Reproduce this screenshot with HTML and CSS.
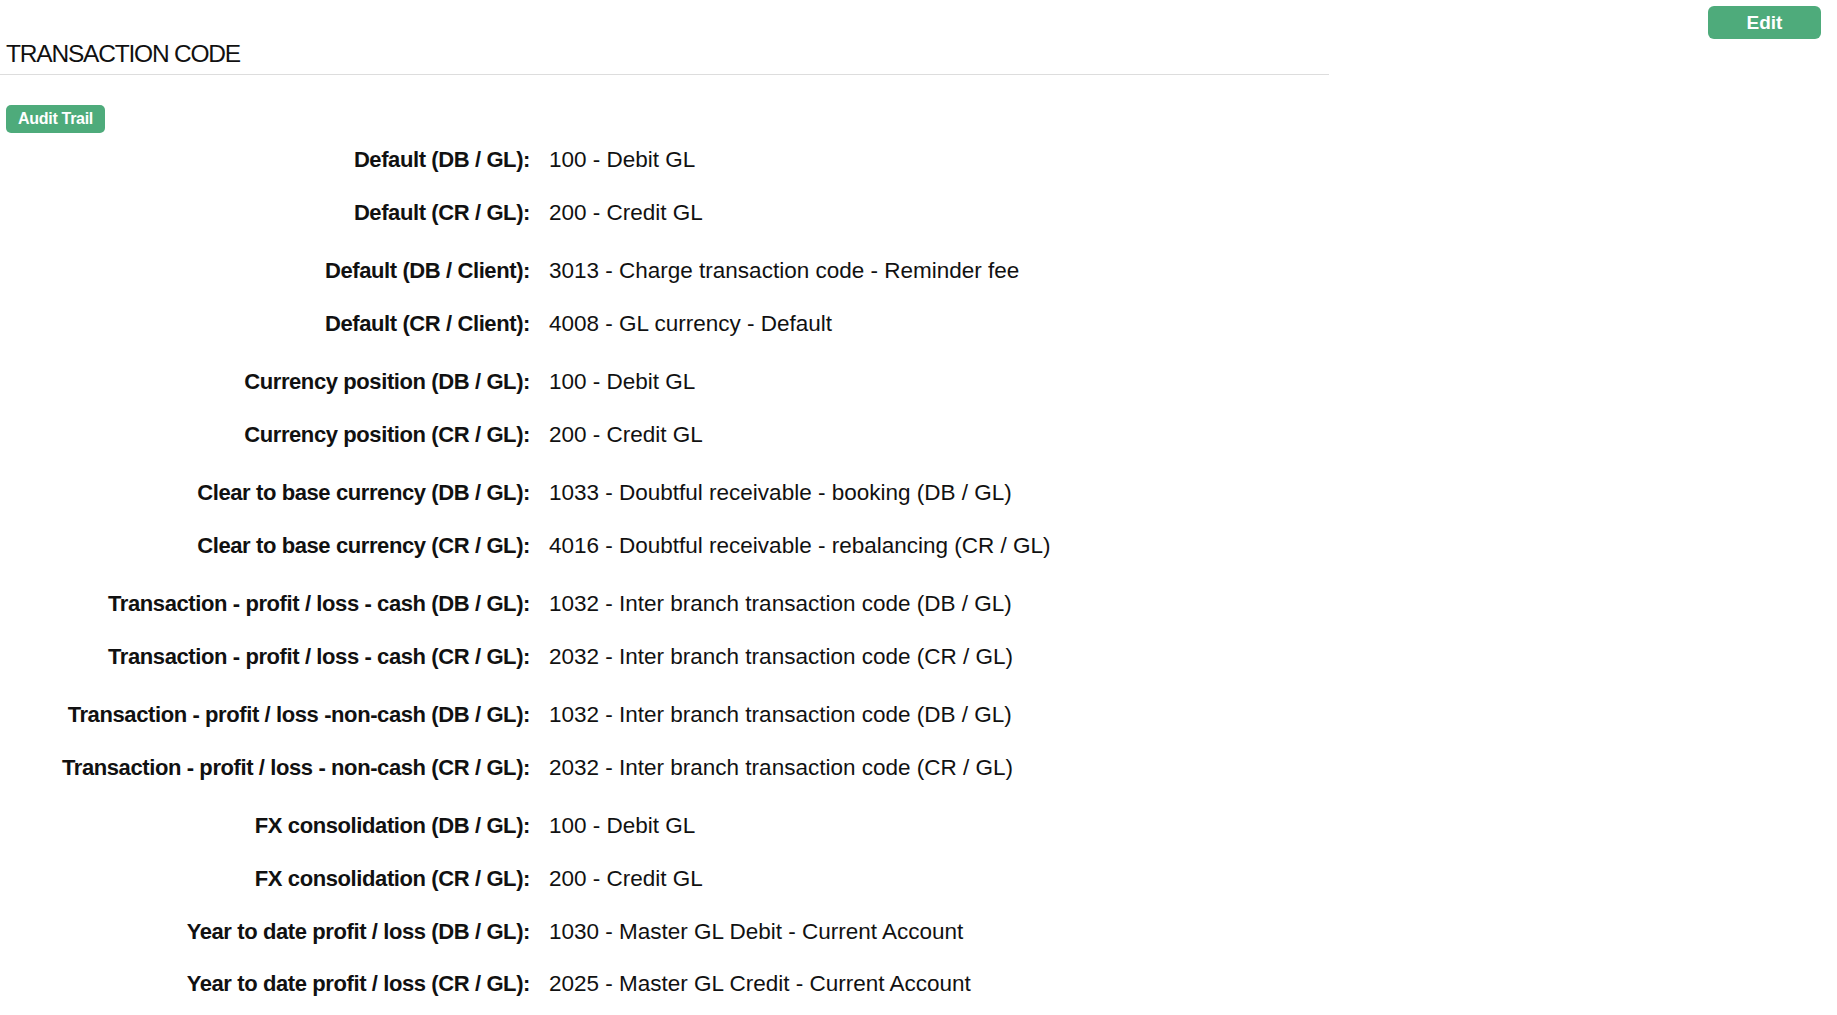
FILE: index.html
```html
<!DOCTYPE html>
<html>
<head>
<meta charset="utf-8">
<title>Transaction Code</title>
<link rel="stylesheet" href="styles.css">
</head>
<body>
<div class="page">
  <div class="main">
    <h1 class="title">TRANSACTION CODE</h1>
    <button class="btn btn-audit">Audit Trail</button>
    <div class="details">
      <div class="group">
        <div class="item"><div class="label">Default (DB / GL):</div><div class="value">100 - Debit GL</div></div>
        <div class="item"><div class="label">Default (CR / GL):</div><div class="value">200 - Credit GL</div></div>
      </div>
      <div class="group">
        <div class="item"><div class="label">Default (DB / Client):</div><div class="value">3013 - Charge transaction code - Reminder fee</div></div>
        <div class="item"><div class="label">Default (CR / Client):</div><div class="value">4008 - GL currency - Default</div></div>
      </div>
      <div class="group">
        <div class="item"><div class="label">Currency position (DB / GL):</div><div class="value">100 - Debit GL</div></div>
        <div class="item"><div class="label">Currency position (CR / GL):</div><div class="value">200 - Credit GL</div></div>
      </div>
      <div class="group">
        <div class="item"><div class="label">Clear to base currency (DB / GL):</div><div class="value">1033 - Doubtful receivable - booking (DB / GL)</div></div>
        <div class="item"><div class="label">Clear to base currency (CR / GL):</div><div class="value">4016 - Doubtful receivable - rebalancing (CR / GL)</div></div>
      </div>
      <div class="group">
        <div class="item"><div class="label">Transaction - profit / loss - cash (DB / GL):</div><div class="value">1032 - Inter branch transaction code (DB / GL)</div></div>
        <div class="item"><div class="label">Transaction - profit / loss - cash (CR / GL):</div><div class="value">2032 - Inter branch transaction code (CR / GL)</div></div>
      </div>
      <div class="group">
        <div class="item"><div class="label">Transaction - profit / loss -non-cash (DB / GL):</div><div class="value">1032 - Inter branch transaction code (DB / GL)</div></div>
        <div class="item"><div class="label">Transaction - profit / loss - non-cash (CR / GL):</div><div class="value">2032 - Inter branch transaction code (CR / GL)</div></div>
      </div>
      <div class="group">
        <div class="item"><div class="label">FX consolidation (DB / GL):</div><div class="value">100 - Debit GL</div></div>
        <div class="item"><div class="label">FX consolidation (CR / GL):</div><div class="value">200 - Credit GL</div></div>
        <div class="item"><div class="label">Year to date profit / loss (DB / GL):</div><div class="value">1030 - Master GL Debit - Current Account</div></div>
        <div class="item"><div class="label">Year to date profit / loss (CR / GL):</div><div class="value">2025 - Master GL Credit - Current Account</div></div>
      </div>
    </div>
  </div>
  <div class="aside">
    <button class="btn btn-edit">Edit</button>
  </div>
</div>
</body>
</html>
```
FILE: styles.css
```css
html, body {
  margin: 0;
  padding: 0;
  background: #fff;
}
body {
  font-family: "Liberation Sans", Arial, sans-serif;
  color: #111;
}
.page {
  display: flex;
  align-items: flex-start;
}
.main {
  width: 1329px;
  flex: none;
}
.aside {
  flex: 1;
  display: flex;
  justify-content: flex-end;
  padding: 6px 16px 0 0;
}
.title {
  margin: 0;
  padding: 39px 0 5px 6px;
  font-weight: normal;
  font-size: 24.5px;
  letter-spacing: -1.2px;
  line-height: 30px;
  color: #111;
  border-bottom: 1px solid #dddddd;
}
.btn {
  display: flex;
  align-items: center;
  justify-content: center;
  border: none;
  padding: 0;
  background: #4eab7b;
  color: #fff;
  font-family: "Liberation Sans", Arial, sans-serif;
  font-weight: bold;
  cursor: pointer;
}
.btn-audit {
  margin: 30px 0 0 6px;
  width: 99px;
  height: 28px;
  border-radius: 5px;
  font-size: 16px;
  letter-spacing: -0.3px;
}
.btn-edit {
  width: 113px;
  height: 33px;
  border-radius: 6px;
  font-size: 19px;
}
.details {
  margin-top: 1px;
}
.group {
  margin-bottom: 5.9px;
}
.item {
  display: flex;
  align-items: baseline;
  height: 52.6px;
}
.label {
  width: 530px;
  flex: none;
  text-align: right;
  font-weight: bold;
  font-size: 22px;
  letter-spacing: -0.4px;
  line-height: 52.6px;
  white-space: nowrap;
}
.value {
  margin-left: 19px;
  font-size: 22.5px;
  line-height: 52.6px;
  white-space: nowrap;
}
```
